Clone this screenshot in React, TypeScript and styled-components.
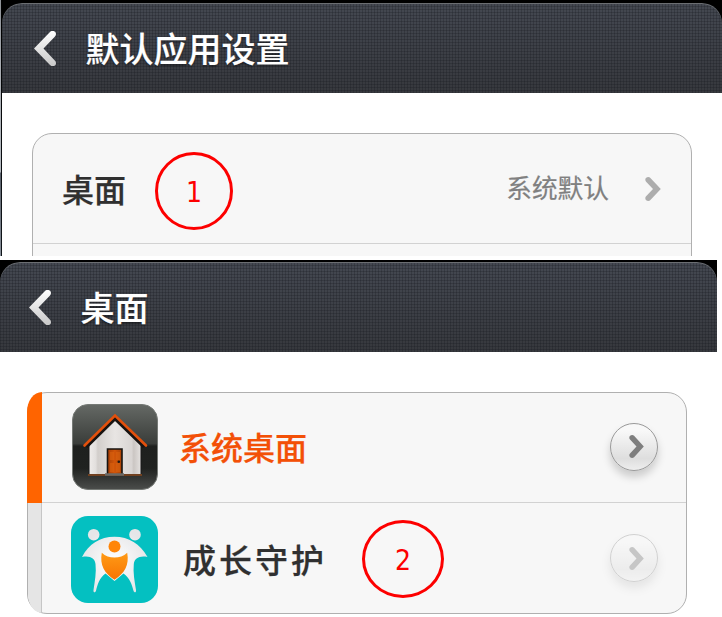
import React from "react";
import styled, { createGlobalStyle, css } from "styled-components";

const GlobalStyle = createGlobalStyle`
  *, *::before, *::after { box-sizing: border-box; }
  html, body { margin: 0; background: #fff; }
  body { overflow: hidden; font-family: "Noto Sans CJK SC", "Noto Sans", sans-serif; }
  svg { display: block; flex: none; }
`;

const Page = styled.main`
  width: 722px;
  height: 617px;
  display: flex;
  flex-direction: column;
  gap: 4px;
  overflow: hidden;
  background: #fff;
`;

const Screen = styled.section<{ $framed?: boolean }>`
  display: flex;
  flex-direction: column;
  overflow: hidden;
  ${(p) =>
    p.$framed
      ? css`
          height: 256px;
          padding: 3px 0 0 2px;
          background:
            linear-gradient(#8d9196, #a9adb2 70px, #b5bac0 172px, #59606a 173px, #89909a) 0 0 / 1px 100% no-repeat,
            linear-gradient(#000, #000) 0 0 / 100% 3px no-repeat,
            linear-gradient(#000, #10151a) 1px 0 / 1px 100% no-repeat,
            #fff;
        `
      : css`
          width: 717px;
          height: 357px;
          padding-top: 2px;
          background: linear-gradient(#000, #000) 0 0 / 100% 2px no-repeat, #fff;
        `}
`;

const HeaderBack = styled.div`
  height: 90px;
  flex: none;
  background: #000;
`;

const Header = styled.header<{ $inset: number }>`
  height: 90px;
  display: flex;
  align-items: center;
  padding: 1px 0 0 ${(p) => p.$inset}px;
  border-radius: 20px 20px 0 0;
  box-shadow: inset 0 1px 0 #6b6e72;
  background:
    repeating-linear-gradient(90deg, rgba(20, 22, 28, 0.25) 0 1px, transparent 1px 3px),
    repeating-linear-gradient(180deg, rgba(20, 22, 28, 0.25) 0 1px, transparent 1px 3px),
    linear-gradient(#444851, #36383d);
`;

const Title = styled.h1`
  margin: 0 0 1px 29.5px;
  font-size: 34px;
  line-height: 50px;
  font-weight: 500;
  color: #fff;
  -webkit-text-stroke: 0.2px #fff;
  text-shadow: 0 2px 2px rgba(0, 0, 0, 0.35);
`;

const Card = styled.div<{ $offset: number; $cut?: boolean }>`
  width: 660px;
  flex: none;
  margin: 40px 0 0 ${(p) => p.$offset}px;
  height: ${(p) => (p.$cut ? 160 : 222)}px;
  border: 1px solid #b0b0b0;
  border-radius: 20px;
  background: #f7f7f7;
`;

const Row = styled.div`
  height: 110px;
  display: flex;
  align-items: center;
  padding: 0 30px 0 29px;
  border-bottom: 1px solid #d2d2d2;
`;

const Choice = styled.div<{ $selected?: boolean }>`
  height: 110px;
  display: flex;
  align-items: stretch;
  padding-right: 28px;
  ${(p) => p.$selected && css`border-bottom: 1px solid #d2d2d2;`}
`;

const ChoiceBody = styled.div<{ $top?: number; $bottom?: number }>`
  flex: 1;
  display: flex;
  align-items: center;
  padding: ${(p) => p.$top ?? 0}px 0 ${(p) => p.$bottom ?? 0}px;
`;

const Marker = styled.span<{ $selected?: boolean }>`
  flex: none;
  ${(p) =>
    p.$selected
      ? css`
          width: 15px;
          margin: -1px 0 -1px -1px;
          border-radius: 15px 0 0 0 / 20px 0 0 0;
          background: #ff6400;
        `
      : css`
          width: 14px;
          border-right: 1px solid #c6c6c6;
          border-radius: 0 0 0 14px / 0 0 0 19px;
          background: #e5e5e5;
        `}
`;

const AppIcon = styled.span<{ $gap: number; $size: number }>`
  margin-left: ${(p) => p.$gap}px;
  width: ${(p) => p.$size}px;
  display: flex;
`;

const Label = styled.span<{ $size?: number; $color?: string; $gap?: number; $spacing?: number }>`
  margin: 0 0 1px ${(p) => p.$gap ?? 0}px;
  font-size: ${(p) => p.$size ?? 32}px;
  line-height: 48px;
  font-weight: 500;
  letter-spacing: ${(p) => p.$spacing ?? 0}px;
  color: ${(p) => p.$color ?? "#303030"};
  -webkit-text-stroke: 0.25px currentColor;
  white-space: nowrap;
`;

const Value = styled.span`
  margin: 0 36px 3px auto;
  font-size: 25.7px;
  line-height: 38px;
  color: #808080;
  -webkit-text-stroke: 0.2px currentColor;
`;

const Step = styled.span<{ $width: number; $gap: number; $drop?: number }>`
  width: ${(p) => p.$width}px;
  height: 78px;
  margin: ${(p) => p.$drop ?? 0}px 0 0 ${(p) => p.$gap}px;
  display: flex;
  flex: none;
  align-items: center;
  justify-content: center;
  padding-top: 4px;
  border: 3px solid #fd0000;
  border-radius: 50%;
  font: 28px/32px "DejaVu Sans", sans-serif;
  font-stretch: condensed;
  color: #fd0000;
`;

const RoundButton = styled.button<{ $faded?: boolean }>`
  width: 48px;
  height: 48px;
  margin: 0 0 ${(p) => (p.$faded ? 2 : 0)}px auto;
  padding: 0 0 0 4px;
  display: flex;
  align-items: center;
  justify-content: center;
  border: 1px solid #999;
  border-radius: 50%;
  background: linear-gradient(#f8f8f8 15%, #dedede 75%, #eee);
  box-shadow: 0 6px 8px rgba(0, 0, 0, 0.18);
  opacity: ${(p) => (p.$faded ? 0.4 : 1)};
`;

const BackArrow = () => (
  <svg width="22" height="35" viewBox="1 1.200 22 35.500" preserveAspectRatio="none">
    <defs>
      <linearGradient id="back" x1="0" y1="0" x2="0" y2="1">
        <stop offset="0" stopColor="#fff" />
        <stop offset="1" stopColor="#c8c8c8" />
      </linearGradient>
    </defs>
    <path
      d="M17 2.200C19.200 0 23 1.200 23 4.200c0 1-.3 1.800-1 2.500L10.500 19 22 31.500c.7.7 1 1.400 1 2.400 0 3-3.800 4.100-6 1.900L1 19Z"
      fill="url(#back)"
    />
  </svg>
);

const Chevron = ({ color, small }: { color: string; small?: boolean }) => (
  <svg width={small ? 15 : 16} height={small ? 23 : 24} viewBox="0 0 16 24" preserveAspectRatio="none">
    <path
      d="M5.400.9C3.700-.8.3.2.3 2.800c0 .8.3 1.400.8 1.900L8 12l-6.900 7.300c-.5.5-.8 1.100-.8 1.900 0 2.600 3.400 3.600 5.100 1.900L15.800 12Z"
      fill={color}
    />
  </svg>
);

const HouseIcon = () => (
  <svg width="86" height="86" viewBox="0 0 86 86">
    <defs>
      <linearGradient id="tile" x1="0" y1="0" x2="0" y2="1">
        <stop offset="0" stopColor="#656965" />
        <stop offset=".46" stopColor="#3a3d3a" />
        <stop offset=".49" stopColor="#1e201e" />
        <stop offset=".75" stopColor="#202220" />
        <stop offset="1" stopColor="#4b4d4b" />
      </linearGradient>
      <linearGradient id="wall">
        <stop offset="0" stopColor="#efecea" />
        <stop offset=".13" stopColor="#e2dfdd" />
        <stop offset=".17" stopColor="#d2cecb" />
        <stop offset=".5" stopColor="#e8e5e3" />
        <stop offset=".82" stopColor="#d9d5d3" />
        <stop offset=".86" stopColor="#cbc6c3" />
        <stop offset="1" stopColor="#e5e2e0" />
      </linearGradient>
      <linearGradient id="door">
        <stop offset="0" stopColor="#a93f05" />
        <stop offset=".5" stopColor="#d2560a" />
        <stop offset="1" stopColor="#a84308" />
      </linearGradient>
    </defs>
    <rect x=".5" y=".5" width="85" height="85" rx="15.500" fill="url(#tile)" stroke="#757975" />
    <path d="M17 40 43 14l26 26v31H17Z" fill="url(#wall)" stroke="#191919" />
    <path d="M14 42.500 43 14l29.500 28.500" fill="none" stroke="#171311" strokeWidth="4.500" />
    <path d="M12.500 41.500 43 11.500l31 30" fill="none" stroke="#e3500c" strokeWidth="2.600" strokeLinecap="round" />
    <path d="M16 71h54" stroke="#71401f" strokeWidth="2" />
    <path d="M35.500 70V45h14.500v25" fill="url(#door)" stroke="#171412" strokeWidth="1.600" />
    <path d="M38 48h4v8h-4Zm6 0h4v8h-4ZM38 59h4v9h-4Zm6 0h4v9h-4Z" fill="#e0650f" fillOpacity=".5" />
    <path d="M33 70.500h19" stroke="#6a6966" strokeWidth="2.500" />
    <circle cx="46.800" cy="57.800" r="1.300" fill="#201915" />
  </svg>
);

const GuardIcon = () => (
  <svg width="87" height="87" viewBox="0 0 87 87">
    <defs>
      <radialGradient id="body" gradientUnits="userSpaceOnUse" cx="43.500" cy="46" r="34">
        <stop offset="0" stopColor="#fff" />
        <stop offset="1" stopColor="#e6e6e8" />
      </radialGradient>
      <linearGradient id="heart" x1="0" y1="0" x2="0" y2="1">
        <stop offset="0" stopColor="#ff9b16" />
        <stop offset="1" stopColor="#f87402" />
      </linearGradient>
    </defs>
    <rect width="87" height="87" rx="17" fill="#04c0c1" />
    <g fill="url(#body)">
      <circle cx="22.700" cy="18.700" r="5.800" />
      <circle cx="64" cy="18.700" r="5.800" />
      <path d="M11 41C18 28 29 20.800 43.500 20.800S69 28 76.500 41C68 39.500 63.500 42.500 62.800 48c-.9 9 .8 17 2.200 26 .4 2.800-1.800 3-2.500.8-1.500-6-3.800-12.800-10-17.300L43.500 65l-9-7.500c-6.200 4.500-8 11.300-9.500 17.300-.7 2.200-2.900 2-2.500-.8 1.300-9 3-17 2-26C23.800 42.500 19.500 39.500 11 41Z" />
    </g>
    <circle cx="43.500" cy="30.500" r="6" fill="#ff8509" />
    <path d="M30.800 36.800c3.500 3.500 8 4.700 12.700 4.700s9.200-1.200 12.700-4.700c2.300 12.200-2.700 20.700-12.700 26.900C33.500 57.500 28.500 49 30.800 36.800Z" fill="url(#heart)" />
  </svg>
);

export default function App() {
  return (
    <>
      <GlobalStyle />
      <Page>
        <Screen $framed>
          <HeaderBack>
            <Header $inset={32}>
              <BackArrow />
              <Title>默认应用设置</Title>
            </Header>
          </HeaderBack>
          <Card $offset={30} $cut>
            <Row>
              <Label>桌面</Label>
              <Step $width={78} $gap={29} $drop={4}>1</Step>
              <Value>系统默认</Value>
              <Chevron color="#adadad" />
            </Row>
          </Card>
        </Screen>
        <Screen>
          <HeaderBack>
            <Header $inset={29}>
              <BackArrow />
              <Title>桌面</Title>
            </Header>
          </HeaderBack>
          <Card $offset={27}>
            <Choice $selected>
              <Marker $selected />
              <ChoiceBody $bottom={2}>
                <AppIcon $gap={30} $size={86}><HouseIcon /></AppIcon>
                <Label $color="#f35007" $gap={21}>系统桌面</Label>
                <RoundButton aria-label="系统桌面"><Chevron small color="#7e7e7e" /></RoundButton>
              </ChoiceBody>
            </Choice>
            <Choice>
              <Marker />
              <ChoiceBody $top={2}>
                <AppIcon $gap={29} $size={87}><GuardIcon /></AppIcon>
                <Label $gap={25} $size={33} $spacing={3}>成长守护</Label>
                <Step $width={82} $gap={35}>2</Step>
                <RoundButton $faded aria-label="成长守护"><Chevron small color="#7e7e7e" /></RoundButton>
              </ChoiceBody>
            </Choice>
          </Card>
        </Screen>
      </Page>
    </>
  );
}
